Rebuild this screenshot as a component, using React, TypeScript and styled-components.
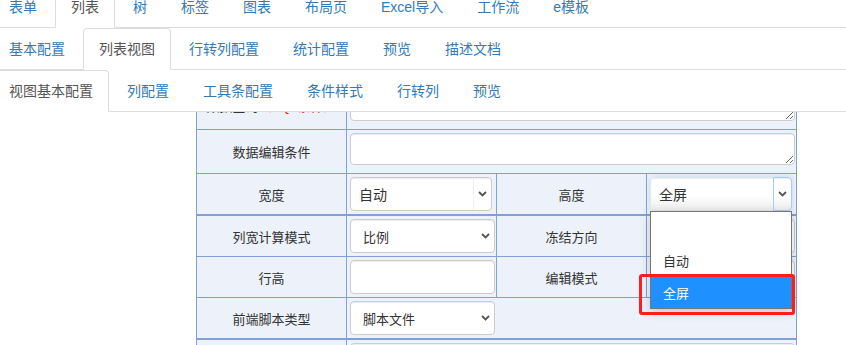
import React from "react";
import styled, { createGlobalStyle } from "styled-components";

const Global = createGlobalStyle`
  html, body { margin: 0; padding: 0; background: #fff; }
  body {
    font-family: "Liberation Sans", "Noto Sans CJK SC", sans-serif;
    font-size: 14px;
    color: #333;
    overflow: hidden;
  }
  * { box-sizing: border-box; }
`;

const Page = styled.div`
  width: 846px;
  height: 345px;
  overflow: hidden;
  display: flex;
  flex-direction: column;
`;

const Tabs = styled.ul<{ $first?: boolean }>`
  list-style: none;
  margin: ${(p) => (p.$first ? "-14px" : "0")} 0 0 -7px;
  padding: 0;
  height: 42px;
  flex-shrink: 0;
  display: flex;
  border-bottom: 1px solid #ddd;
`;

const Tab = styled.li<{ $active?: boolean }>`
  margin: 0 2px -1px 0;
  height: 42px;
  padding: 10px 15px;
  line-height: 20px;
  font-size: 14px;
  white-space: nowrap;
  color: #337ab7;
  border: 1px solid transparent;
  border-radius: 4px 4px 0 0;
  ${(p) =>
    p.$active &&
    `
    color: #555;
    background: #fff;
    border-color: #ddd;
    border-bottom-color: transparent;
  `}
`;

const Content = styled.div`
  flex: 1;
  overflow: hidden;
  padding-left: 196px;
`;

const Stack = styled.div`
  margin-top: -31px;
  width: 601px;
  display: flex;
  flex-direction: column;
`;

const FormGrid = styled.div`
  display: grid;
  grid-template-columns: repeat(4, 149px);
  gap: 1px;
  padding: 1px;
  background: #81a0d5;
`;

const Label = styled.div`
  background: #edf1f9;
  display: flex;
  align-items: center;
  justify-content: center;
  font-size: 13px;
  color: #333;
  white-space: nowrap;
`;

const Red = styled.span`
  color: #ff0000;
`;

const Field = styled.div<{ $span?: number; $anchor?: boolean }>`
  background: #edf1f9;
  padding: 3px 1px 3px 3px;
  grid-column: span ${(p) => p.$span || 1};
  ${(p) => p.$anchor && `position: relative; z-index: 5;`}
`;

const TextArea = styled.textarea<{ $h?: number }>`
  display: block;
  width: 100%;
  height: ${(p) => p.$h || 32}px;
  margin: 0 0 5px 0;
  padding: 6px 12px;
  font: 13px "Liberation Sans", "Noto Sans CJK SC", sans-serif;
  color: #555;
  background: #fff;
  border: 1px solid #ccc;
  border-radius: 4px;
  box-shadow: inset 0 1px 1px rgba(0, 0, 0, 0.075);
  resize: vertical;
  outline: none;
`;

const TextInput = styled.input`
  display: block;
  width: 100%;
  height: 34px;
  padding: 6px 12px;
  font: 13px "Liberation Sans", "Noto Sans CJK SC", sans-serif;
  background: #fff;
  border: 1px solid #ccc;
  border-radius: 4px;
  box-shadow: inset 0 1px 1px rgba(0, 0, 0, 0.075);
  outline: none;
`;

const SelectBox = styled.div<{ $w?: number; $focus?: boolean }>`
  width: ${(p) => (p.$w ? `${p.$w}px` : "100%")};
  height: 34px;
  display: flex;
  align-items: stretch;
  background: ${(p) =>
    p.$focus ? "linear-gradient(#fff 55%, #ededed)" : "#fff"};
  border: 1px solid ${(p) => (p.$focus ? "#e3e6ea" : "#ccc")};
  border-radius: 4px;
  box-shadow: ${(p) =>
    p.$focus
      ? "inset 0 1px 1px rgba(0,0,0,.075), 0 0 6px rgba(102,175,233,.35)"
      : "inset 0 1px 1px rgba(0,0,0,.075)"};
`;

const SelectText = styled.span<{ $big?: boolean }>`
  flex: 1;
  display: flex;
  align-items: center;
  padding-left: ${(p) => (p.$big ? "8px" : "12px")};
  font-size: ${(p) => (p.$big ? "14px" : "13px")};
  color: #333;
`;

const Arrow = styled.span<{ $divider?: boolean; $focus?: boolean }>`
  width: 18px;
  display: flex;
  align-items: center;
  justify-content: center;
  border-left: 1px solid
    ${(p) => (p.$focus ? "#a9cdf0" : p.$divider ? "#f0f0f0" : "transparent")};
  ${(p) =>
    p.$focus &&
    `
    margin: -1px -1px -1px 0;
    width: 19px;
    border: 1px solid #a9cdf0;
    border-radius: 0 4px 4px 0;
  `}
`;

const Dropdown = styled.div`
  position: absolute;
  top: 37px;
  left: 3px;
  width: 142px;
  height: 98px;
  background: #fff;
  border: 1px solid #767676;
  box-shadow: 0 3px 10px rgba(0, 0, 0, 0.18);
`;

const Option = styled.div<{ $selected?: boolean }>`
  height: 32px;
  display: flex;
  align-items: center;
  padding-left: 12px;
  font-size: 13px;
  color: ${(p) => (p.$selected ? "#fff" : "#333")};
  background: ${(p) => (p.$selected ? "#1e90ff" : "transparent")};
`;

const Highlight = styled.div`
  position: absolute;
  left: -12px;
  top: 62px;
  width: 156px;
  height: 41px;
  border: 3px solid #ff1d1d;
  border-radius: 3px;
  pointer-events: none;
`;

const Chevron = () => (
  <svg width="9" height="6" viewBox="0 0 9 6">
    <polyline
      points="1,1 4.5,4.5 8,1"
      fill="none"
      stroke="#555"
      strokeWidth="1.8"
    />
  </svg>
);

const Select: React.FC<{
  value?: string;
  w?: number;
  big?: boolean;
  divider?: boolean;
  focus?: boolean;
}> = ({ value = "", w, big, divider, focus }) => (
  <SelectBox $w={w} $focus={focus}>
    <SelectText $big={big}>{value}</SelectText>
    <Arrow $divider={divider} $focus={focus}>
      <Chevron />
    </Arrow>
  </SelectBox>
);

const tabs1 = ["表单", "列表", "树", "标签", "图表", "布局页", "Excel导入", "工作流", "e模板"];
const tabs2 = ["基本配置", "列表视图", "行转列配置", "统计配置", "预览", "描述文档"];
const tabs3 = ["视图基本配置", "列配置", "工具条配置", "条件样式", "行转列", "预览"];

export default function App() {
  return (
    <>
      <Global />
      <Page>
        <Tabs $first>
          {tabs1.map((t, i) => (
            <Tab key={t} $active={i === 1}>
              {t}
            </Tab>
          ))}
        </Tabs>
        <Tabs>
          {tabs2.map((t, i) => (
            <Tab key={t} $active={i === 1}>
              {t}
            </Tab>
          ))}
        </Tabs>
        <Tabs>
          {tabs3.map((t, i) => (
            <Tab key={t} $active={i === 0}>
              {t}
            </Tab>
          ))}
        </Tabs>
        <Content>
          <Stack>
            <FormGrid>
              <Label>
                数据查询<Red>（SQL条件）</Red>
              </Label>
              <Field $span={3}>
                <TextArea readOnly $h={36} />
              </Field>
              <Label>数据编辑条件</Label>
              <Field $span={3}>
                <TextArea readOnly />
              </Field>
              <Label>宽度</Label>
              <Field>
                <Select value="自动" w={142} big divider />
              </Field>
              <Label>高度</Label>
              <Field $anchor>
                <Select value="全屏" w={142} big focus />
                <Dropdown>
                  <Option />
                  <Option>自动</Option>
                  <Option $selected>全屏</Option>
                  <Highlight />
                </Dropdown>
              </Field>
            </FormGrid>
            <FormGrid>
              <Label>列宽计算模式</Label>
              <Field>
                <Select value="比例" />
              </Field>
              <Label>冻结方向</Label>
              <Field>
                <Select />
              </Field>
              <Label>行高</Label>
              <Field>
                <TextInput readOnly />
              </Field>
              <Label>编辑模式</Label>
              <Field>
                <Select />
              </Field>
              <Label>前端脚本类型</Label>
              <Field $span={3}>
                <Select value="脚本文件" w={145} />
              </Field>
            </FormGrid>
            <FormGrid>
              <Label>前端脚本</Label>
              <Field $span={3}>
                <TextArea readOnly $h={80} />
              </Field>
            </FormGrid>
          </Stack>
        </Content>
      </Page>
    </>
  );
}
